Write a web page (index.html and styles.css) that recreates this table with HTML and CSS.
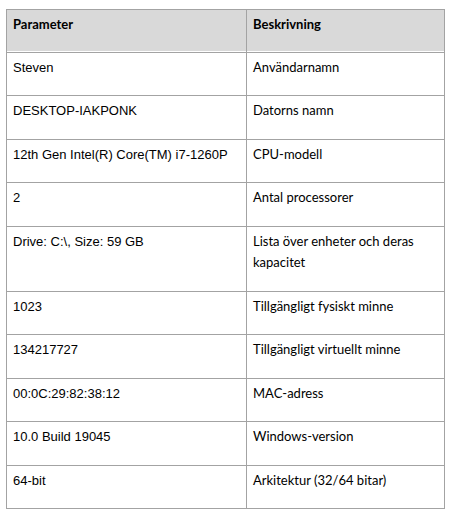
FILE: index.html
```html
<!DOCTYPE html>
<html lang="sv">
<head>
<meta charset="utf-8">
<title>Systeminformation</title>
<link rel="stylesheet" href="styles.css">
</head>
<body>
<table class="info">
  <thead>
    <tr><th class="col-param">Parameter</th><th class="col-desc">Beskrivning</th></tr>
  </thead>
  <tbody>
    <tr><td class="val">Steven</td><td class="desc">Användarnamn</td></tr>
    <tr><td class="val">DESKTOP-IAKPONK</td><td class="desc">Datorns namn</td></tr>
    <tr><td class="val">12th Gen Intel(R) Core(TM) i7-1260P</td><td class="desc">CPU-modell</td></tr>
    <tr><td class="val">2</td><td class="desc">Antal processorer</td></tr>
    <tr><td class="val">Drive: C:\, Size: 59 GB</td><td class="desc">Lista över enheter och deras kapacitet</td></tr>
    <tr><td class="val">1023</td><td class="desc">Tillgängligt fysiskt minne</td></tr>
    <tr><td class="val">134217727</td><td class="desc">Tillgängligt virtuellt minne</td></tr>
    <tr><td class="val">00:0C:29:82:38:12</td><td class="desc">MAC-adress</td></tr>
    <tr><td class="val">10.0 Build 19045</td><td class="desc">Windows-version</td></tr>
    <tr><td class="val">64-bit</td><td class="desc">Arkitektur (32/64 bitar)</td></tr>
  </tbody>
</table>
</body>
</html>
```
FILE: styles.css
```css
html, body {
  margin: 0;
  padding: 0;
  background: #ffffff;
}
body {
  padding: 9px 8px 0 6px;
  color: #000000;
}
.info {
  border-collapse: collapse;
  width: 439px;
  table-layout: fixed;
  font-size: 13px;
  line-height: 21.5px;
}
.info th,
.info td {
  box-sizing: border-box;
  border: 1px solid #a3a3a3;
  text-align: left;
  vertical-align: top;
  padding: 4px 6px 17px 6px;
}
.info th {
  background: #d9d9d9;
  font-family: "Lato", "Liberation Sans", sans-serif;
  font-weight: 700;
  padding-bottom: 16px;
  box-shadow: inset 0 -1px 0 #ffffff;
}
.col-param { width: 240px; }
.val {
  font-family: "Liberation Sans", Arial, sans-serif;
}
.desc {
  font-family: "Lato", "Liberation Sans", sans-serif;
}
```
